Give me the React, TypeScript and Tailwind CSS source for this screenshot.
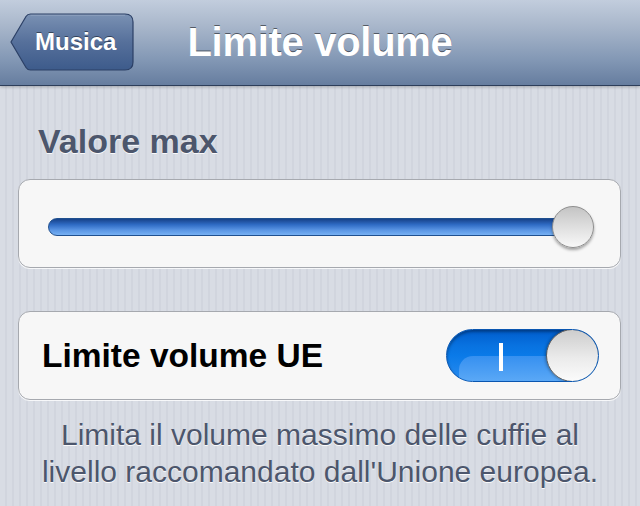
import React from 'react';

const BackButton: React.FC<{ label: string }> = ({ label }) => (
  <div className="relative w-[124px] h-[58px] ml-[10px] mt-[13px] flex items-center">
    <svg className="absolute inset-0" width="124" height="58" viewBox="0 0 124 58">
      <defs>
        <linearGradient id="backFill" x1="0" y1="0" x2="0" y2="1">
          <stop offset="0" stopColor="#7a91b3" />
          <stop offset="0.5" stopColor="#56709b" />
          <stop offset="1" stopColor="#3d5b8b" />
        </linearGradient>
      </defs>
      <path
        d="M1 29 L16 3.5 Q17.5 1 20.5 1 L115 1 Q123 1 123 9 L123 49 Q123 57 115 57 L20.5 57 Q17.5 57 16 54.5 Z"
        fill="url(#backFill)"
        stroke="#2c4066"
        strokeWidth="1.2"
      />
      <path d="M20.5 2.2 L115 2.2" stroke="rgba(255,255,255,0.18)" strokeWidth="1" />
    </svg>
    <span className="relative pl-[25px] text-[24px] leading-none font-bold text-white [text-shadow:0_-1px_0_rgba(0,0,0,0.45)]">
      {label}
    </span>
  </div>
);

const Slider: React.FC = () => (
  <div className="relative flex items-center ml-[29px] mr-[26px] h-[42px]">
    <div className="flex-1 mr-[19px] h-[18px] rounded-full border border-[#20508f] bg-[linear-gradient(to_bottom,#174289,#2f6bc4_35%,#5b96e4_70%,#76b0f3)]" />
    {/* thumb sits over the track end */}
    <div className="absolute right-0 top-0 w-[42px] h-[42px] rounded-full border border-[#8e8e8e] bg-[linear-gradient(to_bottom,#c4c4c4,#e4e4e4_60%,#f8f8f8)] shadow-[0_2px_3px_rgba(0,0,0,0.35)]" />
  </div>
);

const Switch: React.FC = () => (
  <div className="relative w-[153px] h-[53px] rounded-full overflow-hidden border border-[#0a56b0] bg-[linear-gradient(to_bottom,#005ccc,#0872e0_30%,#0a7ae8_50%,#2a8cf0)] shadow-[inset_0_2px_3px_rgba(0,0,0,0.35)]">
    <div className="absolute left-[12px] right-0 top-[26px] bottom-0 rounded-tl-[14px] bg-[linear-gradient(to_bottom,#3690f0,#5aa8f6)]" />
    <div className="absolute left-[52px] top-[13px] w-[4px] h-[28px] bg-white" />
    <div className="absolute right-[-1px] top-[-1px] w-[53px] h-[53px] rounded-full border border-[#5a5a5a] bg-[linear-gradient(to_bottom,#cdcdcd,#ebebeb_55%,#fbfbfb)] shadow-[-1px_0_3px_rgba(0,0,0,0.3)]" />
  </div>
);

export default function App() {
  return (
    <div
      className="w-[640px] h-[506px] overflow-hidden bg-[repeating-linear-gradient(90deg,#d8dce4_0px,#d8dce4_5px,#d1d5de_5px,#d1d5de_7px)]"
      style={{ fontFamily: '"Liberation Sans", Arial, Helvetica, sans-serif' }}
    >
      {/* navigation bar */}
      <div className="h-[86px] grid grid-cols-[1fr_auto_1fr] border-b border-[#2d3e5a] bg-[linear-gradient(to_bottom,#c2cddd,#a9b7cb_30%,#8398b5_70%,#667d9f)] shadow-[0_1px_3px_rgba(0,0,0,0.25)]">
        <div className="flex items-start">
          <BackButton label="Musica" />
        </div>
        <h1 className="self-center pb-[2px] text-[40px] leading-none font-bold tracking-[-0.3px] text-white [text-shadow:0_-1px_0_rgba(0,0,0,0.5)]">
          Limite volume
        </h1>
        <div />
      </div>

      {/* section: max value */}
      <div className="pt-[35px] pl-[38px] text-[34px] leading-[40px] font-bold text-[#4c566c] [text-shadow:0_1px_0_rgba(255,255,255,0.9)]">
        Valore max
      </div>
      <div className="mt-[18px] ml-[18px] mr-[19px] h-[89px] rounded-[12px] border border-[#a6a9af] bg-[#f7f7f7] shadow-[0_1px_0_rgba(255,255,255,0.8)] flex items-center pt-[6px]">
        <div className="w-full">
          <Slider />
        </div>
      </div>

      {/* EU limit toggle */}
      <div className="mt-[43px] ml-[18px] mr-[19px] h-[89px] rounded-[12px] border border-[#a6a9af] bg-[#f7f7f7] shadow-[0_1px_0_rgba(255,255,255,0.8)] flex items-center justify-between pl-[23px] pr-[21px]">
        <span className="text-[33.5px] leading-none font-bold text-black">Limite volume UE</span>
        <Switch />
      </div>

      <p className="mt-[16px] px-[20px] text-center text-[30px] leading-[37px] text-[#4c566c] [text-shadow:0_1px_0_rgba(255,255,255,0.9)]">
        Limita il volume massimo delle cuffie al
        <br />
        livello raccomandato dall'Unione europea.
      </p>
    </div>
  );
}
